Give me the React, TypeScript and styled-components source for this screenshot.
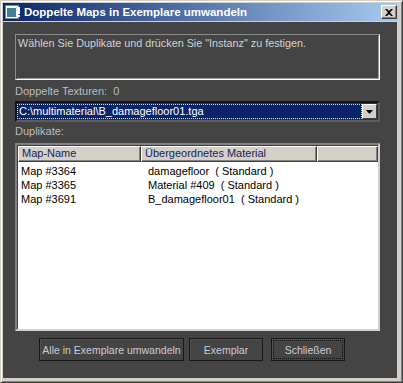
import React from "react";
import styled, { createGlobalStyle } from "styled-components";

const GlobalStyle = createGlobalStyle`
  html, body {
    margin: 0;
    padding: 0;
    background: #d4d0c8;
  }
  * {
    box-sizing: border-box;
  }
`;

const rows = [
  { name: "Map #3364", parent: "damagefloor  ( Standard )" },
  { name: "Map #3365", parent: "Material #409  ( Standard )" },
  { name: "Map #3691", parent: "B_damagefloor01  ( Standard )" },
];

const App: React.FC = () => {
  return (
    <>
      <GlobalStyle />
      <Window>
        <TitleBar>
          <TitleIcon width="16" height="16" viewBox="0 0 16 16">
            <rect x="0.5" y="1.5" width="13" height="13" fill="#fff" stroke="#8a8a8a" />
            <defs>
              <linearGradient id="ico" x1="0" y1="0" x2="1" y2="1">
                <stop offset="0" stopColor="#3a8a7a" />
                <stop offset="1" stopColor="#4a78b8" />
              </linearGradient>
            </defs>
            <rect x="2" y="4" width="9" height="9" fill="url(#ico)" />
            <rect x="12" y="3" width="3" height="7" fill="#fff" />
            <rect x="12" y="11" width="3" height="2" fill="#fff" />
          </TitleIcon>
          <TitleText>Doppelte Maps in Exemplare umwandeln</TitleText>
          <CloseButton>
            <svg width="8" height="7" viewBox="0 0 8 7">
              <path d="M0 0h2l2 2 2-2h2L5 3.5 8 7H6L4 5 2 7H0l3-3.5z" fill="#000" />
            </svg>
          </CloseButton>
        </TitleBar>

        <Client>
          <InfoBox>Wählen Sie Duplikate und drücken Sie "Instanz" zu festigen.</InfoBox>

          <Label $top={4} $bottom={3}>
            Doppelte Texturen:&nbsp;&nbsp;0
          </Label>

          <Combo>
            <ComboField>C:\multimaterial\B_damagefloor01.tga</ComboField>
            <ComboArrow>
              <svg width="7" height="4" viewBox="0 0 7 4">
                <path d="M0 0h7L3.5 4z" fill="#000" />
              </svg>
            </ComboArrow>
          </Combo>

          <Label $top={2} $bottom={5}>
            Duplikate:
          </Label>

          <ListView>
            <Header>
              <HeadCell $w={123}>Map-Name</HeadCell>
              <HeadCell $w={176}>Übergeordnetes Material</HeadCell>
              <HeadCell $w={61} />
            </Header>
            {rows.map((r) => (
              <Row key={r.name}>
                <Cell $w={127}>{r.name}</Cell>
                <Cell $w={200}>{r.parent}</Cell>
              </Row>
            ))}
          </ListView>

          <ButtonRow>
            <Button $w={145}>Alle in Exemplare umwandeln</Button>
            <Button $w={74} $gap={5}>
              Exemplar
            </Button>
            <Button $w={74} $gap={8} $focus>
              Schließen
            </Button>
          </ButtonRow>
        </Client>
      </Window>
    </>
  );
};

export default App;

const Window = styled.div`
  width: 403px;
  height: 383px;
  display: flex;
  flex-direction: column;
  background: #d4d0c8;
  border: 1px solid;
  border-color: #d4d0c8 #404040 #404040 #d4d0c8;
  box-shadow: inset 1px 1px #ffffff, inset -1px -1px #808080;
  padding: 2px 5px 4px 2px;
`;

const TitleBar = styled.div`
  height: 18px;
  display: flex;
  align-items: center;
  padding: 0 1px 0 2px;
  margin-right: -1px;
  background: linear-gradient(to right, #0a246a, #a6caf0);
`;

const TitleIcon = styled.svg`
  flex: none;
  margin-right: 3px;
`;

const TitleText = styled.div`
  flex: 1;
  font-family: "Liberation Sans", Arial, sans-serif;
  font-weight: bold;
  font-size: 11.5px;
  color: #ffffff;
  white-space: nowrap;
`;

const CloseButton = styled.div`
  width: 16px;
  height: 14px;
  display: flex;
  align-items: center;
  justify-content: center;
  background: #d4d0c8;
  border: 1px solid;
  border-color: #ffffff #404040 #404040 #ffffff;
  box-shadow: inset -1px -1px #808080;
`;

const Client = styled.div`
  flex: 1;
  margin-top: 1px;
  background: #444444;
  padding: 12px 17px 0 12px;
  font-family: "Liberation Sans", Arial, sans-serif;
  font-size: 11px;
`;

const InfoBox = styled.div`
  height: 46px;
  border: 1px solid;
  border-color: #8c8c8c #ffffff #ffffff #8c8c8c;
  box-shadow: inset 1px 1px #444, inset -1px -1px #9a9a9a;
  color: #d2d2d2;
  font-size: 10.8px;
  padding: 2px 2px;
`;

const Label = styled.div<{ $top: number; $bottom: number }>`
  color: #bdbdbd;
  height: 14px;
  line-height: 14px;
  margin: ${(p) => p.$top}px 0 ${(p) => p.$bottom}px;
`;

const Combo = styled.div`
  height: 21px;
  display: flex;
  align-items: stretch;
  border: 2px solid;
  border-color: #141414 #5c5c5c #5c5c5c #141414;
  background: #333;
  padding: 1px 1px 1px 0;
`;

const ComboField = styled.div`
  flex: 1;
  background: #0a246a;
  color: #ffffff;
  line-height: 13px;
  padding: 0 1px;
  border: 1px dotted #f0e0a0;
  white-space: nowrap;
`;

const ComboArrow = styled.div`
  width: 15px;
  display: flex;
  align-items: center;
  justify-content: center;
  background: #d4d0c8;
  border: 1px solid;
  border-color: #ffffff #404040 #404040 #ffffff;
`;

const ListView = styled.div`
  height: 188px;
  background: #ffffff;
  border: 2px solid;
  border-color: #808080 #d4d0c8 #d4d0c8 #808080;
  box-shadow: inset 1px 1px #404040;
  padding: 1px 0 0 1px;
  color: #000000;
`;

const Header = styled.div`
  display: flex;
  height: 16px;
  margin-bottom: 2px;
`;

const HeadCell = styled.div<{ $w: number }>`
  width: ${(p) => p.$w}px;
  background: #d4d0c8;
  border: 1px solid;
  border-color: #ffffff #404040 #404040 #ffffff;
  box-shadow: inset -1px -1px #808080;
  color: #14235a;
  line-height: 13px;
  padding-left: 3px;
  white-space: nowrap;
`;

const Row = styled.div`
  display: flex;
  height: 14px;
  line-height: 14px;
`;

const Cell = styled.div<{ $w: number }>`
  width: ${(p) => p.$w}px;
  padding-left: 3px;
  white-space: pre;
`;

const ButtonRow = styled.div`
  display: flex;
  margin-top: 7px;
  padding-left: 24px;
`;

const Button = styled.div<{ $w: number; $gap?: number; $focus?: boolean }>`
  width: ${(p) => p.$w}px;
  height: 23px;
  margin-left: ${(p) => p.$gap || 0}px;
  background: #444444;
  border: 1px solid #181818;
  box-shadow: inset 1px 1px #505050;
  color: #c8ccd6;
  font-size: 10.5px;
  display: flex;
  align-items: center;
  justify-content: center;
  white-space: nowrap;
  ${(p) => (p.$focus ? "outline: 1px dotted #111; outline-offset: -3px;" : "")}
`;
